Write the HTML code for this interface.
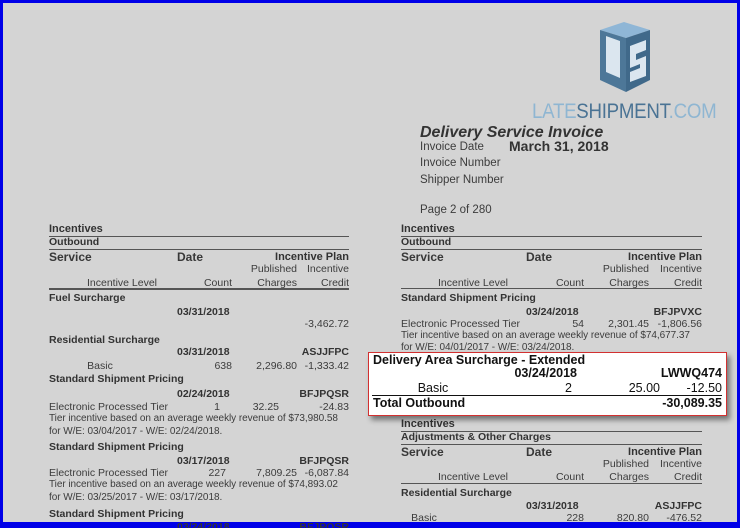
<!DOCTYPE html>
<html><head><meta charset="utf-8"><style>
*{margin:0;padding:0;box-sizing:border-box}
html,body{width:740px;height:528px;overflow:hidden}
body{background:#0000e8;position:relative;font-family:"Liberation Sans",Arial,sans-serif;color:#3c3c3c}
#pg{position:absolute;left:3px;top:3px;width:734px;height:519px;background:#d4d4d4;overflow:hidden}
.t{position:absolute;font-size:10.5px;line-height:14px;white-space:nowrap}
.r{text-align:right;width:200px}
.c{text-align:center;width:200px}
.b{font-weight:bold;color:#333}
.h{font-size:12px;font-weight:bold;color:#383838}
.s{font-size:10px;letter-spacing:-0.05px}
.hr{position:absolute;height:1px;background:#555}
#box{position:absolute;left:368px;top:352px;width:359px;height:64px;background:#fff;border:1.5px solid #d23030;box-shadow:3px 4px 5px rgba(0,0,0,.45)}
#box .t{color:#111;font-size:12.5px;line-height:15px}
</style></head><body><div id="pg"></div>
<div style="position:absolute;left:0;top:0;width:740px;height:528px">

<!-- logo -->
<svg style="position:absolute;left:596px;top:22px" width="58" height="72" viewBox="0 0 58 72">
<polygon points="4,8 28,0 54,8 30,16" fill="#8fb6d6"/>
<polygon points="4,8 30,16 30,70 4,58" fill="#4d7798"/>
<polygon points="30,16 54,8 54,58 30,70" fill="#40698a"/>
<polygon points="10,14 24,19 24,56 10,50" fill="#dbe6ef"/>
<polygon points="34,24 50,18 50,28 40,32 40,38 50,34 50,54 34,60 34,50 44,46 44,42 34,46" fill="#dbe6ef"/>
</svg>
<div class="t" style="left:532px;top:99px;font-size:21px;line-height:26px;letter-spacing:-0.3px;transform:scaleX(0.89);transform-origin:left"><span style="color:#8fb6d2">LATE</span><span style="color:#4a7394">SHIPMENT</span><span style="color:#8fb6d2">.COM</span></div>

<!-- header -->
<div class="t" style="left:420px;top:124px;font-size:16px;line-height:18px;font-weight:bold;font-style:italic;color:#333">Delivery Service Invoice</div>
<div class="t" style="left:420px;top:140px;font-size:11.5px">Invoice Date</div>
<div class="t b" style="left:509px;top:138px;font-size:14px;line-height:16px">March 31, 2018</div>
<div class="t" style="left:420px;top:156px;font-size:11.5px">Invoice Number</div>
<div class="t" style="left:420px;top:173px;font-size:11.5px">Shipper Number</div>
<div class="t" style="left:420px;top:203px;font-size:11.5px">Page 2 of 280</div>

<!-- left column -->
<div class="t b" style="left:49px;top:222px;font-size:11px">Incentives</div>
<div class="hr" style="left:49px;top:236px;width:300px"></div>
<div class="t b" style="left:49px;top:235px">Outbound</div>
<div class="hr" style="left:49px;top:249px;width:300px"></div>
<div class="t h" style="left:49px;top:250px">Service</div>
<div class="t h" style="left:177px;top:250px">Date</div>
<div class="t b r" style="left:149px;top:250px;font-size:11px">Incentive Plan</div>
<div class="t r" style="left:97px;top:262px">Published</div>
<div class="t r" style="left:149px;top:262px">Incentive</div>
<div class="t c" style="left:22px;top:276px">Incentive Level</div>
<div class="t r" style="left:32px;top:276px">Count</div>
<div class="t r" style="left:97px;top:276px">Charges</div>
<div class="t r" style="left:149px;top:276px">Credit</div>
<div class="hr" style="left:49px;top:288px;width:300px;height:2px"></div>
<div class="t b" style="left:49px;top:291px">Fuel Surcharge</div>
<div class="t b" style="left:177px;top:305px">03/31/2018</div>
<div class="t r" style="left:149px;top:317px">-3,462.72</div>
<div class="t b" style="left:49px;top:333px">Residential Surcharge</div>
<div class="t b" style="left:177px;top:345px">03/31/2018</div>
<div class="t b r" style="left:149px;top:345px">ASJJFPC</div>
<div class="t c" style="left:0px;top:359px">Basic</div>
<div class="t r" style="left:32px;top:359px">638</div>
<div class="t r" style="left:97px;top:359px">2,296.80</div>
<div class="t r" style="left:149px;top:359px">-1,333.42</div>
<div class="t b" style="left:49px;top:372px">Standard Shipment Pricing</div>
<div class="t b" style="left:177px;top:387px">02/24/2018</div>
<div class="t b r" style="left:149px;top:387px">BFJPQSR</div>
<div class="t" style="left:49px;top:400px">Electronic Processed Tier</div>
<div class="t r" style="left:20px;top:400px">1</div>
<div class="t r" style="left:79px;top:400px">32.25</div>
<div class="t r" style="left:149px;top:400px">-24.83</div>
<div class="t s" style="left:49px;top:412px">Tier incentive based on an average weekly revenue of $73,980.58</div>
<div class="t s" style="left:49px;top:425px">for W/E: 03/04/2017 - W/E: 02/24/2018.</div>
<div class="t b" style="left:49px;top:440px">Standard Shipment Pricing</div>
<div class="t b" style="left:177px;top:454px">03/17/2018</div>
<div class="t b r" style="left:149px;top:454px">BFJPQSR</div>
<div class="t" style="left:49px;top:466px">Electronic Processed Tier</div>
<div class="t r" style="left:26px;top:466px">227</div>
<div class="t r" style="left:97px;top:466px">7,809.25</div>
<div class="t r" style="left:149px;top:466px">-6,087.84</div>
<div class="t s" style="left:49px;top:478px">Tier incentive based on an average weekly revenue of $74,893.02</div>
<div class="t s" style="left:49px;top:491px">for W/E: 03/25/2017 - W/E: 03/17/2018.</div>
<div class="t b" style="left:49px;top:507px">Standard Shipment Pricing</div>
<div class="t b" style="left:177px;top:520px">03/24/2018</div>
<div class="t b r" style="left:149px;top:520px">BFJPQSR</div>

<!-- right column -->
<div class="t b" style="left:401px;top:222px;font-size:11px">Incentives</div>
<div class="hr" style="left:401px;top:236px;width:301px"></div>
<div class="t b" style="left:401px;top:235px">Outbound</div>
<div class="hr" style="left:401px;top:249px;width:301px"></div>
<div class="t h" style="left:401px;top:250px">Service</div>
<div class="t h" style="left:526px;top:250px">Date</div>
<div class="t b r" style="left:502px;top:250px;font-size:11px">Incentive Plan</div>
<div class="t r" style="left:449px;top:262px">Published</div>
<div class="t r" style="left:502px;top:262px">Incentive</div>
<div class="t c" style="left:373px;top:276px">Incentive Level</div>
<div class="t r" style="left:384px;top:276px">Count</div>
<div class="t r" style="left:449px;top:276px">Charges</div>
<div class="t r" style="left:502px;top:276px">Credit</div>
<div class="hr" style="left:401px;top:288px;width:301px"></div>
<div class="t b" style="left:401px;top:291px">Standard Shipment Pricing</div>
<div class="t b" style="left:526px;top:305px">03/24/2018</div>
<div class="t b r" style="left:502px;top:305px">BFJPVXC</div>
<div class="t" style="left:401px;top:317px">Electronic Processed Tier</div>
<div class="t r" style="left:384px;top:317px">54</div>
<div class="t r" style="left:449px;top:317px">2,301.45</div>
<div class="t r" style="left:502px;top:317px">-1,806.56</div>
<div class="t s" style="left:401px;top:329px">Tier incentive based on an average weekly revenue of $74,677.37</div>
<div class="t s" style="left:401px;top:341px">for W/E: 04/01/2017 - W/E: 03/24/2018.</div>
<div class="t b" style="left:401px;top:417px;font-size:11px">Incentives</div>
<div class="hr" style="left:401px;top:431px;width:301px"></div>
<div class="t b" style="left:401px;top:430px">Adjustments &amp; Other Charges</div>
<div class="hr" style="left:401px;top:444px;width:301px"></div>
<div class="t h" style="left:401px;top:445px">Service</div>
<div class="t h" style="left:526px;top:445px">Date</div>
<div class="t b r" style="left:502px;top:445px;font-size:11px">Incentive Plan</div>
<div class="t r" style="left:449px;top:457px">Published</div>
<div class="t r" style="left:502px;top:457px">Incentive</div>
<div class="t c" style="left:373px;top:470px">Incentive Level</div>
<div class="t r" style="left:384px;top:470px">Count</div>
<div class="t r" style="left:449px;top:470px">Charges</div>
<div class="t r" style="left:502px;top:470px">Credit</div>
<div class="hr" style="left:401px;top:483px;width:301px"></div>
<div class="t b" style="left:401px;top:486px">Residential Surcharge</div>
<div class="t b" style="left:526px;top:499px">03/31/2018</div>
<div class="t b r" style="left:502px;top:499px">ASJJFPC</div>
<div class="t c" style="left:324px;top:511px">Basic</div>
<div class="t r" style="left:384px;top:511px">228</div>
<div class="t r" style="left:449px;top:511px">820.80</div>
<div class="t r" style="left:502px;top:511px">-476.52</div>

<!-- popup -->
<div id="box">
<div class="t b" style="left:4px;top:0px">Delivery Area Surcharge - Extended</div>
<div class="t b r" style="left:8px;top:13px">03/24/2018</div>
<div class="t b r" style="left:153px;top:13px">LWWQ474</div>
<div class="t c" style="left:-36px;top:28px">Basic</div>
<div class="t r" style="left:3px;top:28px">2</div>
<div class="t r" style="left:91px;top:28px">25.00</div>
<div class="t r" style="left:153px;top:28px">-12.50</div>
<div style="position:absolute;left:3px;top:42px;width:350px;height:1px;background:#111"></div>
<div class="t b" style="left:4px;top:43px">Total Outbound</div>
<div class="t b r" style="left:153px;top:43px">-30,089.35</div>
</div>
</div>
</body></html>
